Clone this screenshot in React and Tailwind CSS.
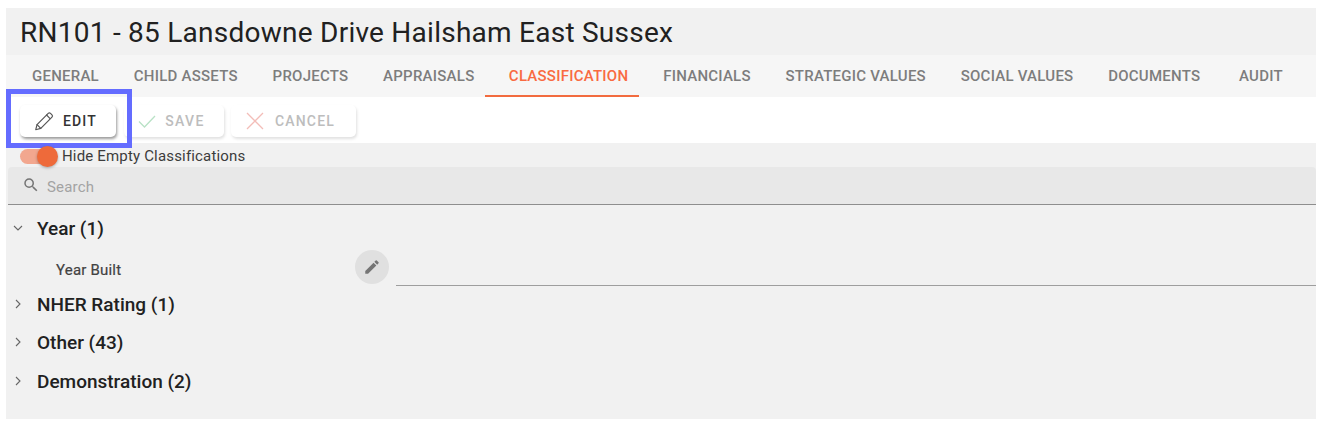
import React from "react";

const tabs = ["GENERAL", "CHILD ASSETS", "PROJECTS", "APPRAISALS", "CLASSIFICATION", "FINANCIALS", "STRATEGIC VALUES", "SOCIAL VALUES", "DOCUMENTS", "AUDIT"];

function Pencil({ className }) {
  return (
    <svg viewBox="0 0 24 24" className={className} fill="none" stroke="currentColor" strokeWidth="1.3" strokeLinejoin="round" strokeLinecap="round">
      <path d="M3 21.5l1.4-5.6L16.6 3.7a1.8 1.8 0 0 1 2.5 0l1.6 1.6a1.8 1.8 0 0 1 0 2.5L8.5 20 3 21.5z" />
      <path d="M14.8 5.5l3.6 3.6" />
      <path d="M4.4 15.9l4.1 4.1" />
    </svg>
  );
}

function Chevron({ open }) {
  return (
    <svg viewBox="0 0 10 10" className="w-[10px] h-[10px] text-[#666]" fill="none" stroke="currentColor" strokeWidth="1.1">
      {open ? <path d="M1 3l4 4 4-4" /> : <path d="M3 1l4 4-4 4" />}
    </svg>
  );
}

function Group({ open, label, className }) {
  return (
    <div className={`flex items-center pl-[7px] ${className}`}>
      <span className="w-[24px] flex items-center justify-start"><Chevron open={open} /></span>
      <span className="text-[19px] font-medium text-[#212121] leading-none">{label}</span>
    </div>
  );
}

function tabClass(t) {
  if (t === "CLASSIFICATION") return "text-[#f96a41] border-[#f26b3f] ml-[-7px] mr-[6.5px] pl-[24px] pr-[11px]";
  if (t === "AUDIT") return "text-[#7d7d7d] border-transparent ml-[4px] px-[17.4px]";
  return "text-[#7d7d7d] border-transparent px-[17.4px]";
}

export default function App() {
  return (
    <div className="w-[1325px] h-[427px] bg-white pt-2 pl-[6px] font-['Roboto',sans-serif] overflow-hidden">
      <div className="relative w-[1310px] h-[411px] bg-[#f1f1f1] flex flex-col">
        <div className="h-[47px] shrink-0 pl-[14px] flex items-center pt-[3px]">
          <h1 className="text-[28px] font-normal leading-none text-[#212121] tracking-[0.25px]">RN101 - 85 Lansdowne Drive Hailsham East Sussex</h1>
        </div>

        <div className="h-[42px] shrink-0 bg-[#f6f6f6] flex pl-[8.6px] text-[15px] font-medium tracking-[0.24px]">
          {tabs.map((t) => (
            <div key={t} className={`h-full flex items-center pt-[2px] border-b-2 whitespace-nowrap ${tabClass(t)}`}>
              {t}
            </div>
          ))}
        </div>

        <div className="h-[46px] shrink-0 bg-white flex items-center pl-[14px] pt-[2px]">
          <button className="w-[96px] h-[32px] rounded-[5px] bg-white shadow-[1px_2px_3px_rgba(0,0,0,0.4)] flex items-center justify-center gap-[8px] pr-[6px] text-[14px] font-medium tracking-[1.2px] text-[#333]">
            <Pencil className="w-[22px] h-[22px] text-[#555]" />
            EDIT
          </button>
          <button className="ml-[8px] w-[100px] h-[32px] rounded-[5px] bg-white shadow-[1px_2px_3px_rgba(0,0,0,0.12)] flex items-center justify-center gap-[8px] pr-[6px] text-[14px] font-medium tracking-[1.3px] text-[#bdbdbd]">
            <svg viewBox="0 0 20 20" className="w-[20px] h-[20px] text-[#b9e2c6]" fill="none" stroke="currentColor" strokeWidth="1.3"><path d="M2 10.5l5.5 5.5L18 5" /></svg>
            SAVE
          </button>
          <button className="ml-[7px] w-[125px] h-[32px] rounded-[5px] bg-white shadow-[1px_2px_3px_rgba(0,0,0,0.12)] flex items-center justify-center gap-[10px] pr-[7px] text-[14px] font-medium tracking-[1.2px] text-[#bdbdbd]">
            <svg viewBox="0 0 20 20" className="w-[20px] h-[20px] text-[#f3bdb8]" fill="none" stroke="currentColor" strokeWidth="1.3"><path d="M2 2l16 16M18 2L2 18" /></svg>
            CANCEL
          </button>
        </div>

        <div className="h-[24px] shrink-0 flex items-center pl-[14px] relative z-10">
          <span className="relative w-[36px] h-[15px] rounded-full bg-[#f2a78f] mt-[2px]">
            <span className="absolute right-[-2px] top-[-3px] w-[21px] h-[21px] rounded-full bg-[#ee6a3a] shadow-[0_1px_3px_rgba(0,0,0,0.3)]" />
          </span>
          <span className="ml-[6px] mt-[2px] text-[15px] text-[#3c3c3c] tracking-[0.17px]">Hide Empty Classifications</span>
        </div>

        <div className="h-[38px] shrink-0 bg-[#e8e8e8] border-b border-[#8e8e8e] rounded-t-[4px] flex items-center pl-[14px] ml-[2px]">
          <svg viewBox="0 0 24 24" className="w-[18px] h-[18px] text-[#757575] mb-[2px]" fill="currentColor"><path d="M15.5 14h-.79l-.28-.27A6.47 6.47 0 0 0 16 9.5 6.5 6.5 0 1 0 9.5 16c1.61 0 3.09-.59 4.23-1.57l.27.28v.79l5 4.99L20.49 19l-4.99-5zm-6 0C7.01 14 5 11.99 5 9.5S7.01 5 9.5 5 14 7.01 14 9.5 11.99 14 9.5 14z" /></svg>
          <span className="ml-[7px] mt-[4px] text-[15px] text-[#a3a3a3] tracking-[0.2px]">Search</span>
        </div>

        <Group open label="Year (1)" className="mt-[14px] h-[18px]" />

        <div className="flex h-[48px] shrink-0 items-start mt-[13px]">
          <span className="ml-[50px] w-[299px] mt-[13px] text-[15px] font-normal tracking-[0.2px] [-webkit-text-stroke:0.2px_#424242] text-[#424242] leading-none">Year Built</span>
          <span className="w-[34px] h-[34px] rounded-full bg-[#e0e0e0] flex items-center justify-center text-[#757575]">
            <svg viewBox="0 0 24 24" className="w-[18px] h-[18px]" fill="currentColor"><path d="M3 17.25V21h3.75L17.81 9.94l-3.75-3.75L3 17.25zM20.71 7.04a1 1 0 0 0 0-1.41l-2.34-2.34a1 1 0 0 0-1.41 0l-1.83 1.83 3.75 3.75 1.83-1.83z" /></svg>
          </span>
          <span className="ml-[7px] flex-1 h-[36px] border-b border-[#9e9e9e]" />
        </div>

        <Group label="NHER Rating (1)" className="mt-[-3px] h-[18px]" />
        <Group label="Other (43)" className="mt-[20px] h-[18px]" />
        <Group label="Demonstration (2)" className="mt-[21px] h-[18px]" />

        <div className="absolute left-0 top-[81px] w-[126px] h-[59px] border-[5px] border-[#646cff] pointer-events-none" />
      </div>
    </div>
  );
}
